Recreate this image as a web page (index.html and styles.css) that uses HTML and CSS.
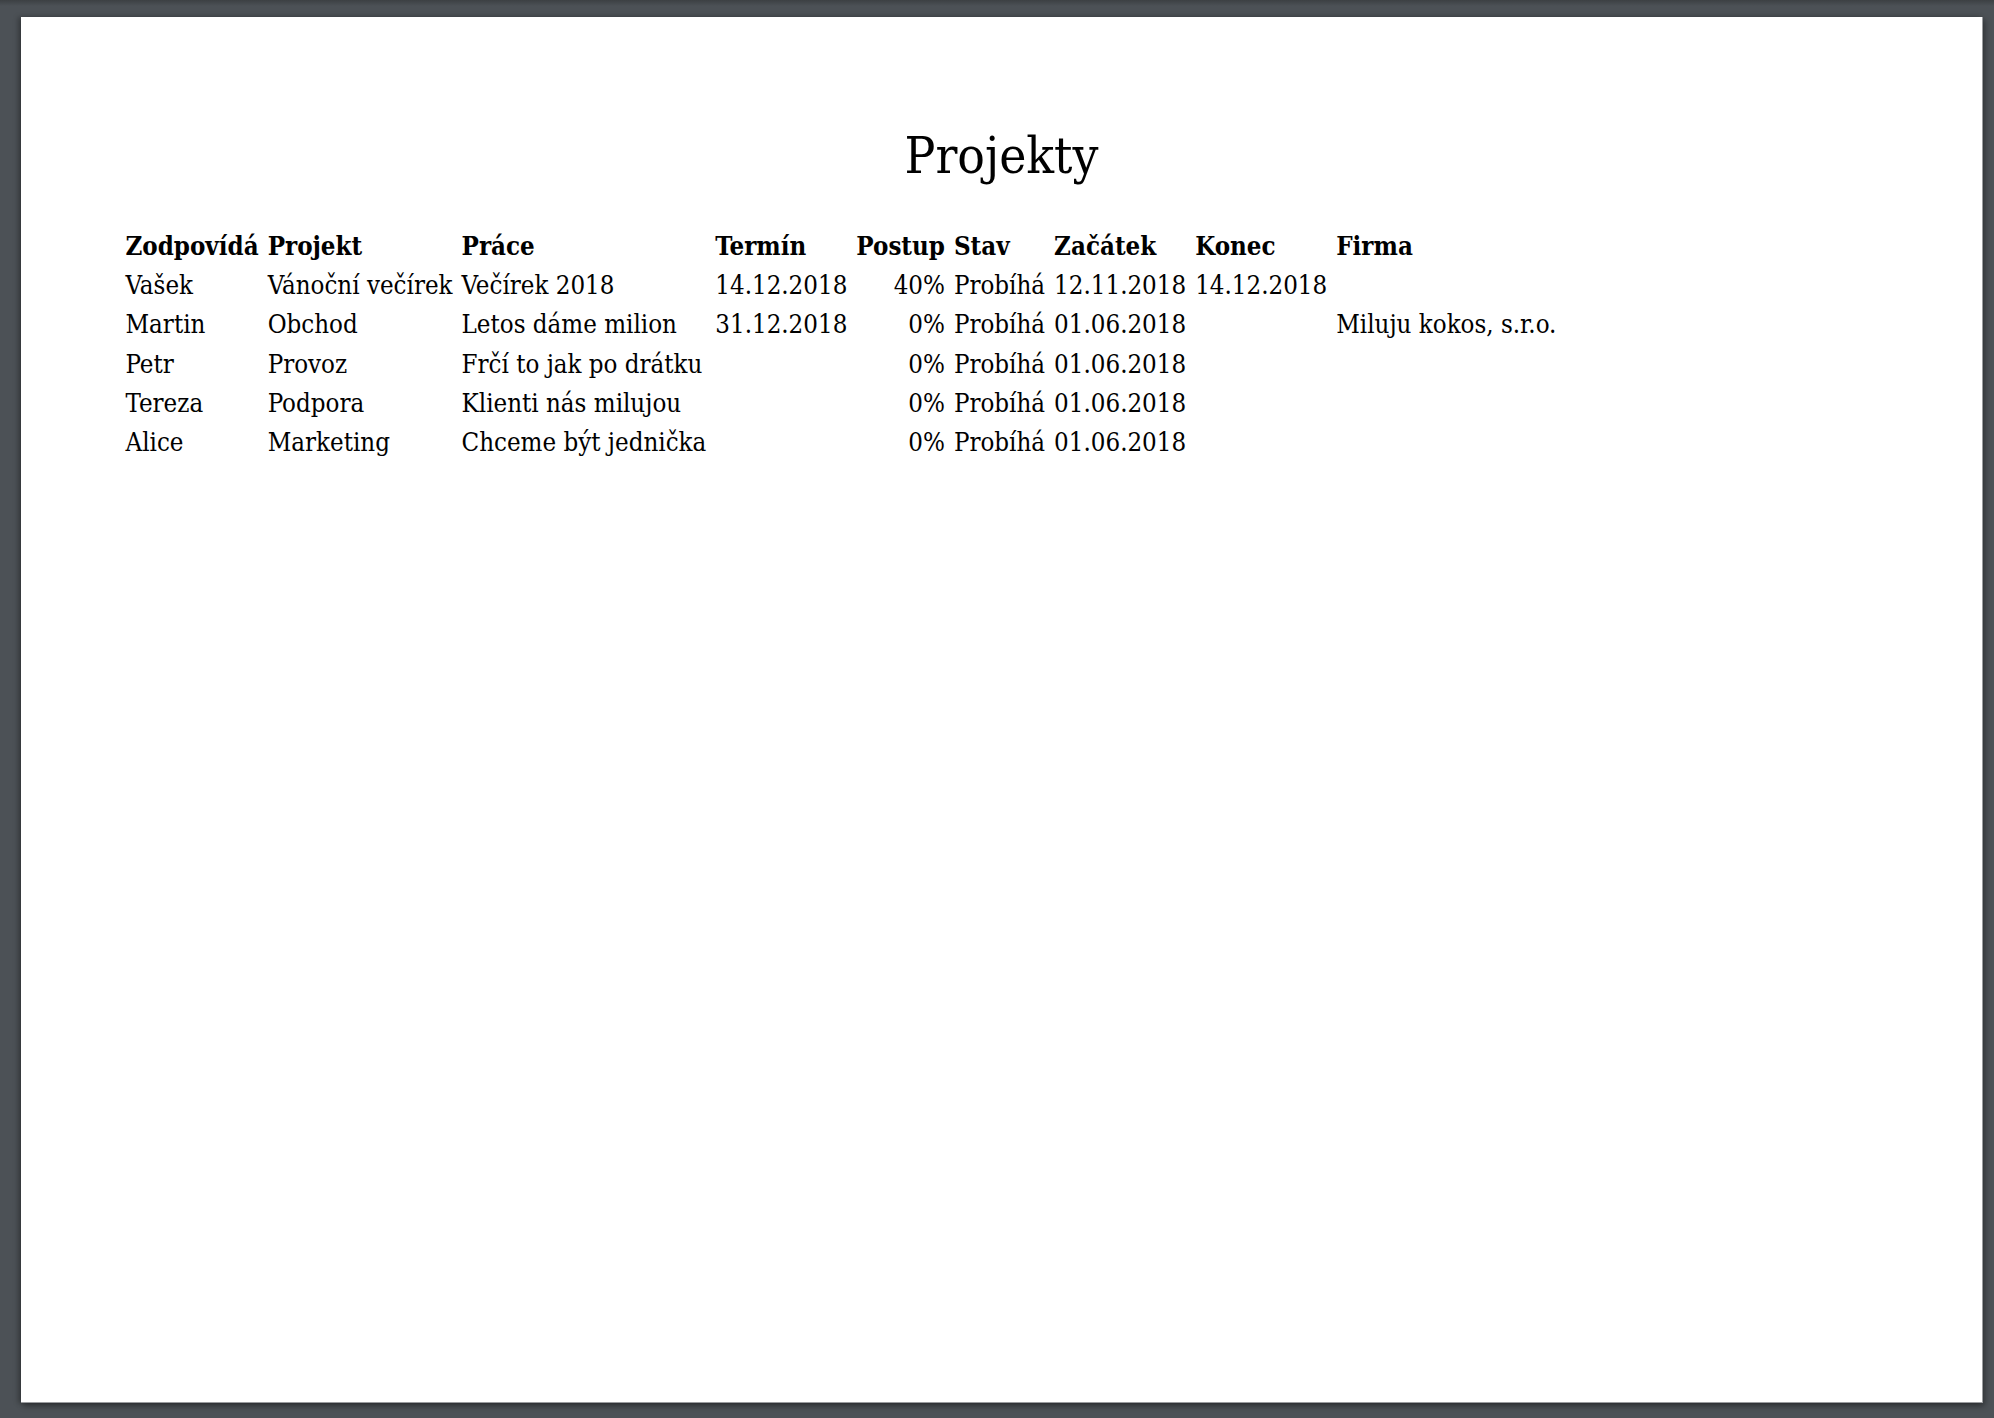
FILE: index.html
```html
<!DOCTYPE html>
<html lang="cs">
<head>
<meta charset="utf-8">
<title>Projekty</title>
<link rel="stylesheet" href="styles.css">
</head>
<body>
<div class="viewer">
  <div class="page">
    <h1 class="title">Projekty</h1>
    <table class="projects">
      <thead>
        <tr>
          <th>Zodpovídá</th><th>Projekt</th><th>Práce</th><th>Termín</th><th>Postup</th><th>Stav</th><th>Začátek</th><th>Konec</th><th>Firma</th>
        </tr>
      </thead>
      <tbody>
        <tr><td>Vašek</td><td>Vánoční večírek</td><td>Večírek 2018</td><td>14.12.2018</td><td class="num">40%</td><td>Probíhá</td><td>12.11.2018</td><td>14.12.2018</td><td></td></tr>
        <tr><td>Martin</td><td>Obchod</td><td>Letos dáme milion</td><td>31.12.2018</td><td class="num">0%</td><td>Probíhá</td><td>01.06.2018</td><td></td><td>Miluju kokos, s.r.o.</td></tr>
        <tr><td>Petr</td><td>Provoz</td><td>Frčí to jak po drátku</td><td></td><td class="num">0%</td><td>Probíhá</td><td>01.06.2018</td><td></td><td></td></tr>
        <tr><td>Tereza</td><td>Podpora</td><td>Klienti nás milujou</td><td></td><td class="num">0%</td><td>Probíhá</td><td>01.06.2018</td><td></td><td></td></tr>
        <tr><td>Alice</td><td>Marketing</td><td>Chceme být jednička</td><td></td><td class="num">0%</td><td>Probíhá</td><td>01.06.2018</td><td></td><td></td></tr>
      </tbody>
    </table>
  </div>
</div>
</body>
</html>
```

FILE: styles.css
```css
html, body {
  margin: 0;
  padding: 0;
}

body {
  background: #4c5156;
  width: 1994px;
  height: 1418px;
  overflow: hidden;
  font-family: "DejaVu Serif Condensed", "DejaVu Serif", serif;
  font-stretch: condensed;
  color: #000;
}

.viewer {
  height: 1418px;
  padding: 17px 0 0 21px;
  box-sizing: border-box;
  background: linear-gradient(to bottom, #3c4043 0px, #4c5156 6px, #4c5156 100%);
}

.page {
  width: 1962px;
  height: 1386px;
  background: #fff;
  border-right: 1px solid #9a9c9f;
  border-bottom: 1px solid #9a9c9f;
  box-shadow: -3px 0 5px rgba(0, 0, 0, 0.25), 2px 3px 6px rgba(0, 0, 0, 0.35);
  padding: 113px 0 0 100px;
  box-sizing: border-box;
}

.title {
  margin: 0 0 45px -100px;
  font-size: 51px;
  font-weight: normal;
  text-align: center;
  line-height: 52px;
}

.projects {
  border-collapse: collapse;
  font-size: 25.65px;
}

.projects th,
.projects td {
  padding: 0 4.5px;
  line-height: 39.2px;
  text-align: left;
  white-space: nowrap;
  vertical-align: baseline;
}

.projects th {
  font-weight: bold;
}

.projects td.num {
  text-align: right;
}
```
